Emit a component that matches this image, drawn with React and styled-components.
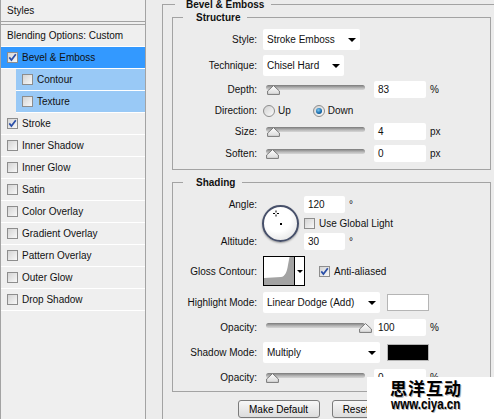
import React from "react";
import styled, { createGlobalStyle } from "styled-components";

const GlobalStyle = createGlobalStyle`
  html, body {
    margin: 0;
    padding: 0;
    background: #ececec;
  }
  body {
    font-family: "Liberation Sans", Arial, sans-serif;
    font-size: 10px;
    color: #111;
  }
`;

const Dialog = styled.div`
  position: relative;
  display: flex;
  width: 494px;
  height: 419px;
  overflow: hidden;
  background: #ececec;
`;

/* ---------- left: effect list ---------- */

const StylesPanel = styled.div`
  flex: none;
  width: 146px;
  height: 100%;
  box-sizing: border-box;
  border-left: 1px solid #a3a3a3;
  border-right: 1px solid #a3a3a3;
  background: #efefef;
`;

const PanelTitle = styled.div`
  height: 21px;
  display: flex;
  align-items: center;
  padding-left: 6px;
  border-bottom: 1px solid #a3a3a3;
`;

const EffectList = styled.div`
  margin-top: 2px;
  border-top: 1px solid #a3a3a3;
`;

const tones = {
  selected: "#3399ff",
  sub: "#99c9f6",
  plain: "transparent",
};

const EffectRow = styled.div`
  height: 21px;
  display: flex;
  align-items: center;
  gap: 4px;
  margin-left: ${(p) => (p.$tone === "sub" ? 15 : 0)}px;
  padding-left: 6px;
  border-bottom: 1px solid #fff;
  background: ${(p) => tones[p.$tone]};
  white-space: nowrap;
`;

const CheckBox = styled.span`
  flex: none;
  width: 11px;
  height: 11px;
  box-sizing: border-box;
  display: inline-flex;
  align-items: center;
  justify-content: center;
  border: 1px solid #8d8d8d;
  background: linear-gradient(135deg, #d4d4d4 0%, #f8f8f8 100%);
`;

function Check({ checked }) {
  return (
    <CheckBox>
      {checked && (
        <svg width="9" height="9" viewBox="0 0 9 9">
          <path d="M1.3 4.4 L3.4 7 L7.8 1.2" fill="none" stroke="#2a4fa8" strokeWidth="1.7" />
        </svg>
      )}
    </CheckBox>
  );
}

const effects = [
  { label: "Bevel & Emboss", checked: true, tone: "selected" },
  { label: "Contour", tone: "sub" },
  { label: "Texture", tone: "sub" },
  { label: "Stroke", checked: true },
  { label: "Inner Shadow" },
  { label: "Inner Glow" },
  { label: "Satin" },
  { label: "Color Overlay" },
  { label: "Gradient Overlay" },
  { label: "Pattern Overlay" },
  { label: "Outer Glow" },
  { label: "Drop Shadow" },
];

/* ---------- right: group boxes ---------- */

const Main = styled.div`
  flex: none;
  width: 345px;
  margin-left: 16px;
`;

const OuterGroup = styled.fieldset`
  margin: -2px 0 0;
  padding: 0 0 12px 9px;
  border: 1px solid #a3a3a3;
  min-width: 0;
`;

const Legend = styled.legend`
  margin-left: ${(p) => p.$offset}px;
  padding: 0 7px 0 ${(p) => p.$pad}px;
  font-weight: bold;
  line-height: 13px;
`;

const SubGroup = styled.fieldset`
  width: 319px;
  box-sizing: border-box;
  margin: ${(p) => p.$mt}px 0 0;
  padding: ${(p) => p.$pt}px 0 ${(p) => p.$pb}px;
  border: 1px solid #a3a3a3;
  min-width: 0;
`;

const Rows = styled.div`
  display: flex;
  flex-direction: column;
  gap: ${(p) => p.$gap}px;
`;

const Row = styled.div`
  display: grid;
  grid-template-columns: 84px auto;
  column-gap: 6px;
  align-items: center;
  height: ${(p) => p.$h}px;
`;

const Label = styled.span`
  text-align: right;
  white-space: nowrap;
`;

const Controls = styled.div`
  display: flex;
  align-items: center;
  gap: ${(p) => p.$gap ?? 7}px;
`;

const Select = styled.div`
  width: ${(p) => p.$w}px;
  height: 21px;
  box-sizing: border-box;
  display: flex;
  align-items: center;
  justify-content: space-between;
  padding: 0 4px;
  background: #fff;
  border-radius: 2px;
  white-space: nowrap;
`;

const Caret = styled.span`
  width: 0;
  height: 0;
  border-left: 4px solid transparent;
  border-right: 4px solid transparent;
  border-top: 4px solid #000;
`;

const Field = styled.div`
  flex: none;
  width: ${(p) => p.$w}px;
  height: 17px;
  box-sizing: border-box;
  display: flex;
  align-items: center;
  padding-left: 4px;
  background: #fff;
  border-radius: 2px;
`;

const Unit = styled.span`
  margin-left: -3px;
`;

const SliderTrack = styled.div`
  position: relative;
  flex: none;
  width: 104px;
  height: 17px;

  &::before {
    content: "";
    position: absolute;
    left: 3px;
    right: 2px;
    top: 4px;
    height: 5px;
    border-radius: 3px;
    background: linear-gradient(#7a7a7a, #b9b9b9 60%, #d6d6d6);
  }
`;

const Thumb = styled.svg`
  position: absolute;
  top: 4px;
`;

function Slider({ pos }) {
  return (
    <SliderTrack>
      <Thumb width="13" height="10" viewBox="0 0 13 10" style={{ left: 3 + pos * 93 }}>
        <defs>
          <linearGradient id="thumbFill" x1="0" y1="0" x2="0" y2="1">
            <stop offset="0" stopColor="#ffffff" />
            <stop offset="1" stopColor="#d9d9d9" />
          </linearGradient>
        </defs>
        <path d="M6.5 0.6 L12.4 6 L12.4 9.4 L0.6 9.4 L0.6 6 Z" fill="url(#thumbFill)" stroke="#777" strokeWidth="1" />
      </Thumb>
    </SliderTrack>
  );
}

const RadioDot = styled.span`
  flex: none;
  width: 12px;
  height: 12px;
  box-sizing: border-box;
  border-radius: 50%;
  border: 1px solid #8d8d8d;
  background: linear-gradient(135deg, #d2d2d2, #fafafa);
  display: inline-flex;
  align-items: center;
  justify-content: center;

  &::after {
    content: "";
    display: ${(p) => (p.$on ? "block" : "none")};
    width: 6px;
    height: 6px;
    border-radius: 50%;
    background: radial-gradient(circle at 40% 35%, #7cc8f2, #1467a8 60%, #0b3f70);
  }
`;

const Option = styled.span`
  display: inline-flex;
  align-items: center;
  gap: ${(p) => p.$gap ?? 3}px;
  margin-right: ${(p) => p.$mr || 0}px;
  white-space: nowrap;
`;

const AngleBlock = styled.div`
  display: grid;
  grid-template-columns: 84px 37px auto;
  grid-template-rows: 17px 1fr 17px;
  column-gap: 5px;
  align-items: center;
  height: 54px;
`;

const BlockLabel = styled(Label)`
  grid-column: 1;
  grid-row: ${(p) => p.$row};
`;

const BlockCell = styled.div`
  grid-column: 3;
  grid-row: ${(p) => p.$row};
  display: flex;
  align-items: center;
  gap: 4px;
`;

const Dial = styled.div`
  grid-column: 2;
  grid-row: 1 / 4;
  align-self: start;
  margin-top: 9px;
  width: 37px;
  height: 37px;
  box-sizing: border-box;
  border-radius: 50%;
  border: 2px solid #47506a;
  background: radial-gradient(circle at 40% 35%, #ffffff 45%, #dadada);
  box-shadow: 0 1px 2px rgba(0, 0, 0, 0.35);
`;

const ContourPicker = styled.div`
  flex: none;
  display: flex;
  width: 42px;
  height: 30px;
  box-sizing: border-box;
  border: 1px solid #000;
  background: #fff;
`;

const ContourArrow = styled.div`
  flex: 1;
  display: flex;
  align-items: center;
  justify-content: center;
  border-left: 1px solid #000;
`;

const SmallCaret = styled(Caret)`
  border-left-width: 3px;
  border-right-width: 3px;
  border-top-width: 3px;
`;

const Swatch = styled.div`
  flex: none;
  width: 42px;
  height: 17px;
  box-sizing: border-box;
  border: 1px solid #b5b5b5;
  background: ${(p) => p.$color};
`;

const ButtonBar = styled.div`
  display: flex;
  justify-content: center;
  gap: 12px;
  width: 319px;
  margin-top: 8px;
`;

const Button = styled.button`
  width: ${(p) => p.$w}px;
  height: 18px;
  padding: 0;
  font: inherit;
  color: #000;
  border: 1px solid #7b7b7b;
  border-radius: 3px;
  background: linear-gradient(#f7f7f7, #dcdcdc);
`;

/* ---------- site stamp in the corner ---------- */

const Watermark = styled.div`
  position: absolute;
  right: 0;
  bottom: 0;
  width: 127px;
  height: 42px;
  box-sizing: border-box;
  padding-right: 9px;
  background: #fff;
  display: flex;
  flex-direction: column;
  align-items: center;
`;

const MarkTitle = styled.div`
  margin-top: 2px;
  font-family: "Noto Sans CJK SC", sans-serif;
  font-weight: 700;
  font-size: 17px;
  line-height: 18px;
  letter-spacing: 1px;
  color: #000;
  text-shadow: 1px 1px 0 #b8b8b8;
`;

const MarkUrl = styled.div`
  font-family: "Liberation Sans", Arial, sans-serif;
  font-weight: bold;
  font-size: 14px;
  line-height: 14px;
  color: #000;
  transform: scaleX(0.83);
  text-shadow: 1px 1px 0 #b8b8b8;
`;

function ModeSelect({ value, w }) {
  return (
    <Select $w={w}>
      <span>{value}</span>
      <Caret />
    </Select>
  );
}

function SliderRow({ label, pos, value, unit }) {
  return (
    <Row $h={17}>
      <Label>{label}</Label>
      <Controls>
        <Slider pos={pos} />
        <Field $w={52}>{value}</Field>
        <Unit>{unit}</Unit>
      </Controls>
    </Row>
  );
}

export default function App() {
  return (
    <>
      <GlobalStyle />
      <Dialog>
        <StylesPanel>
          <PanelTitle>Styles</PanelTitle>
          <EffectList>
            <EffectRow $tone="plain">Blending Options: Custom</EffectRow>
            {effects.map((fx) => (
              <EffectRow key={fx.label} $tone={fx.tone || "plain"}>
                <Check checked={fx.checked} />
                {fx.label}
              </EffectRow>
            ))}
          </EffectList>
        </StylesPanel>

        <Main>
          <OuterGroup>
            <Legend $offset={3} $pad={11}>Bevel &amp; Emboss</Legend>

            <SubGroup $mt={0} $pt={5} $pb={7}>
              <Legend $offset={10} $pad={13}>Structure</Legend>
              <Rows $gap={5}>
                <Row $h={21}>
                  <Label>Style:</Label>
                  <Controls>
                    <ModeSelect value="Stroke Emboss" w={97} />
                  </Controls>
                </Row>
                <Row $h={21}>
                  <Label>Technique:</Label>
                  <Controls>
                    <ModeSelect value="Chisel Hard" w={81} />
                  </Controls>
                </Row>
                <SliderRow label="Depth:" pos={0.01} value="83" unit="%" />
                <Row $h={15}>
                  <Label>Direction:</Label>
                  <Controls $gap={0}>
                    <Option $mr={22}>
                      <RadioDot />
                      Up
                    </Option>
                    <Option>
                      <RadioDot $on />
                      Down
                    </Option>
                  </Controls>
                </Row>
                <SliderRow label="Size:" pos={0.01} value="4" unit="px" />
                <SliderRow label="Soften:" pos={0} value="0" unit="px" />
              </Rows>
            </SubGroup>

            <SubGroup $mt={6} $pt={7} $pb={5}>
              <Legend $offset={10} $pad={13}>Shading</Legend>
              <Rows $gap={6}>
                <AngleBlock>
                  <BlockLabel $row={1}>Angle:</BlockLabel>
                  <Dial>
                    <svg width="33" height="33" viewBox="0 0 33 33">
                      <path d="M9 6.5 H11 M13 6.5 H15 M12 3.5 V5.5 M12 7.5 V9.5" stroke="#000" strokeWidth="1" />
                      <rect x="16" y="16" width="2" height="2" fill="#000" />
                    </svg>
                  </Dial>
                  <BlockCell $row={1}>
                    <Field $w={41}>120</Field>
                    <span>°</span>
                  </BlockCell>
                  <BlockCell $row={2}>
                    <Option $gap={4}>
                      <Check />
                      Use Global Light
                    </Option>
                  </BlockCell>
                  <BlockLabel $row={3}>Altitude:</BlockLabel>
                  <BlockCell $row={3}>
                    <Field $w={41}>30</Field>
                    <span>°</span>
                  </BlockCell>
                </AngleBlock>

                <Row $h={30}>
                  <Label>Gloss Contour:</Label>
                  <Controls $gap={14}>
                    <ContourPicker>
                      <svg width="30" height="28" viewBox="0 0 30 28">
                        <path
                          d="M0 28 L0 21 L17 20 C21 19.5 23 15 24 8 L25.5 0 L30 0 L30 28 Z"
                          fill="#a3a3a3"
                        />
                      </svg>
                      <ContourArrow>
                        <SmallCaret />
                      </ContourArrow>
                    </ContourPicker>
                    <Option $gap={4}>
                      <Check checked />
                      Anti-aliased
                    </Option>
                  </Controls>
                </Row>

                <Row $h={21}>
                  <Label>Highlight Mode:</Label>
                  <Controls>
                    <ModeSelect value="Linear Dodge (Add)" w={117} />
                    <Swatch $color="#ffffff" />
                  </Controls>
                </Row>
                <SliderRow label="Opacity:" pos={1} value="100" unit="%" />
                <Row $h={21}>
                  <Label>Shadow Mode:</Label>
                  <Controls>
                    <ModeSelect value="Multiply" w={117} />
                    <Swatch $color="#000000" />
                  </Controls>
                </Row>
                <SliderRow label="Opacity:" pos={0} value="0" unit="%" />
              </Rows>
            </SubGroup>

            <ButtonBar>
              <Button $w={82}>Make Default</Button>
              <Button $w={94}>Reset to Default</Button>
            </ButtonBar>
          </OuterGroup>
        </Main>

        <Watermark>
          <MarkTitle>思洋互动</MarkTitle>
          <MarkUrl>www.ciya.cn</MarkUrl>
        </Watermark>
      </Dialog>
    </>
  );
}
